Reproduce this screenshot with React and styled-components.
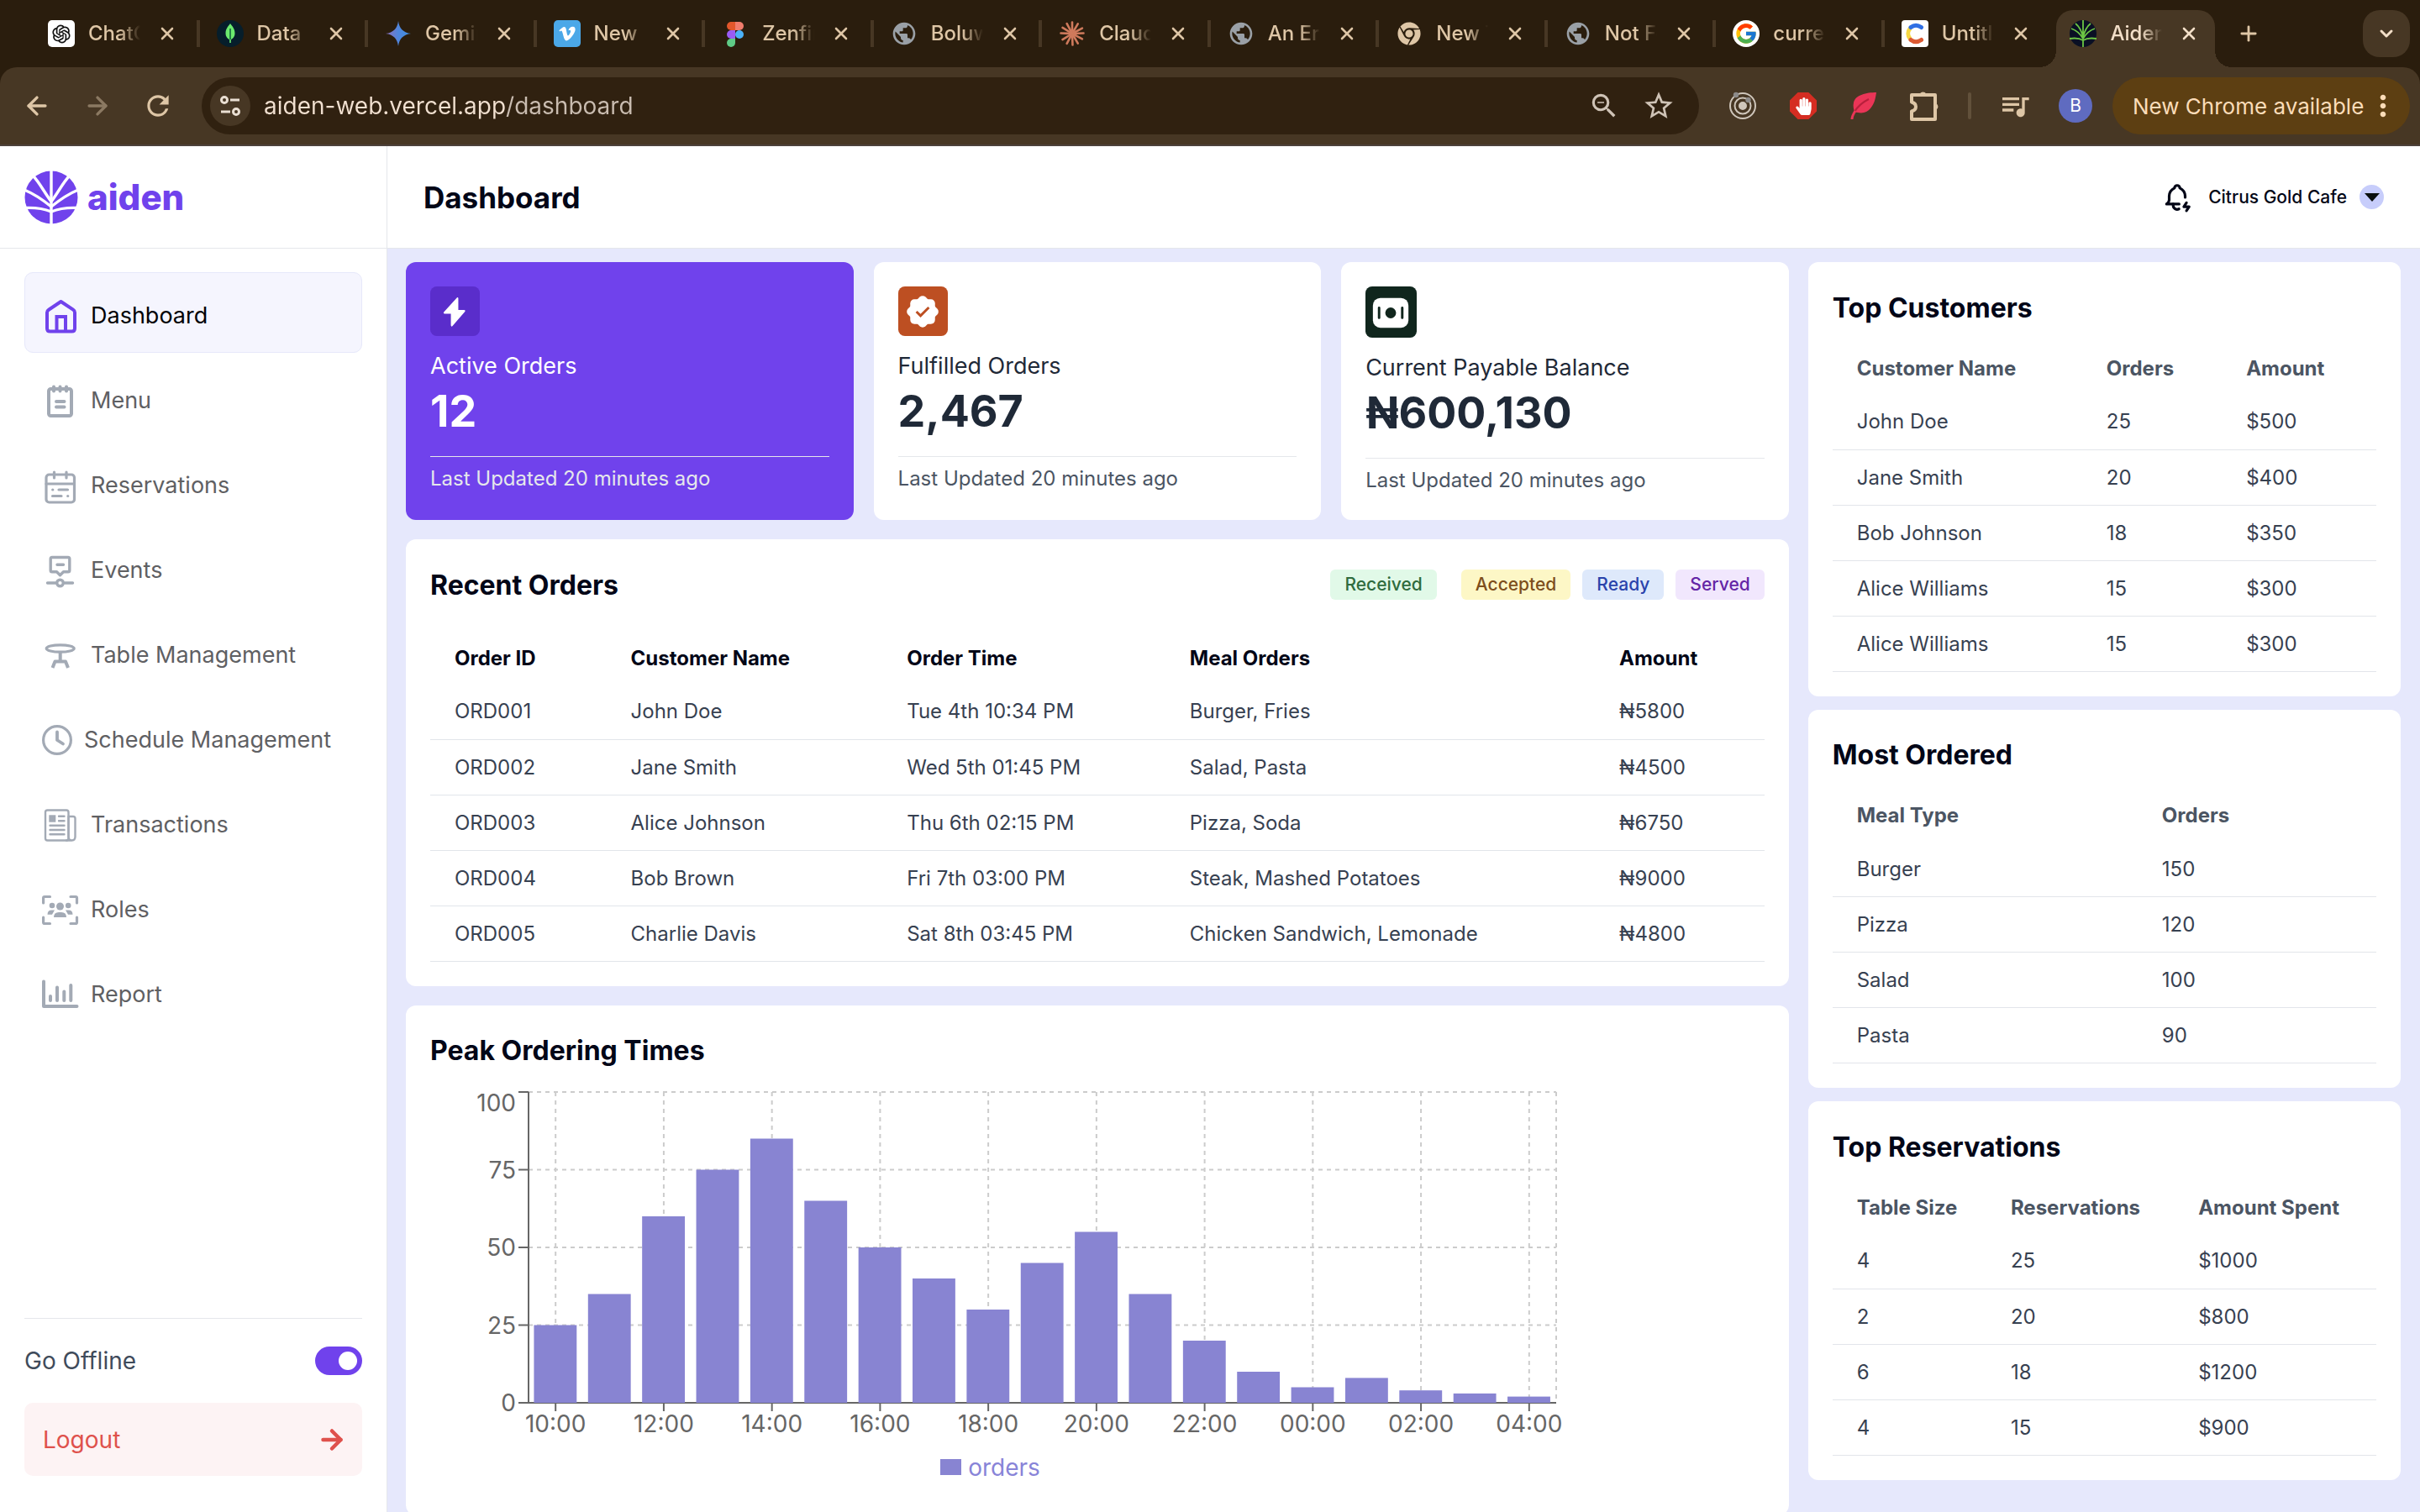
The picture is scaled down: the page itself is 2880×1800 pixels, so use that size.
import React, { useState } from "react"
import styled, { createGlobalStyle, css } from "styled-components"
import { ArrowLeft, ArrowRight, ChevronDown, Plus, X } from "lucide-react"
import { AiOutlineOpenAI } from "react-icons/ai"
import { FaChrome, FaHandPaper, FaVimeoV } from "react-icons/fa"
import { FcGoogle } from "react-icons/fc"
import { MdMoreVert, MdPublic, MdQueueMusic, MdRefresh, MdStarBorder, MdZoomOut } from "react-icons/md"
import { TbBellBolt } from "react-icons/tb"

const CURRENCY = "\u20A6"

/* ---------- favicons ---------- */

const MongoIcon = () => (
	<svg width="32" height="32" viewBox="0 0 32 32">
		<circle cx="16" cy="16" r="16" fill="#061e2b" />
		<path d="M16 4c3 4 5.500 6.500 5.500 11.500S18.500 22 16 24c-2.500-2-5.500-3.500-5.500-8.500S13 8 16 4z" fill="#6bea6e" />
		<path d="M16 10v17" stroke="#0b5a3a" strokeWidth="1.500" />
		<path d="M16 23v4" stroke="#6bea6e" strokeWidth="1.500" />
	</svg>
)

const GeminiIcon = () => (
	<svg width="32" height="32" viewBox="0 0 32 32">
		<defs>
			<linearGradient id="gemini" x1="0" y1="0" x2="1" y2="0">
				<stop offset="0" stopColor="#8f6fb8" />
				<stop offset="0.5" stopColor="#4f86dd" />
				<stop offset="1" stopColor="#3f8fe0" />
			</linearGradient>
		</defs>
		<path d="M16 1c1.200 9 6 13.800 15 15-9 1.200-13.800 6-15 15-1.200-9-6-13.800-15-15 9-1.200 13.800-6 15-15z" fill="url(#gemini)" />
	</svg>
)

const FigmaIcon = () => (
	<svg width="32" height="32" viewBox="0 0 32 32">
		<path d="M16 2h-5a5 5 0 0 0 0 10h5z" fill="#e2572b" />
		<path d="M16 2h5a5 5 0 0 1 0 10h-5z" fill="#f07c6c" />
		<path d="M16 12h-5a5 5 0 0 0 0 10h5z" fill="#9a5cf5" />
		<circle cx="21" cy="17" r="5" fill="#4bb2f9" />
		<path d="M16 22h-5a5 5 0 1 0 5 5z" fill="#5fcb86" />
	</svg>
)

const BurstIcon = () => (
	<svg width="32" height="32" viewBox="0 0 32 32" stroke="#cf7a5c" strokeWidth="2.600" strokeLinecap="round">
		{[0, 30, 62, 88, 118, 150, 178, 208, 238, 272, 302, 332].map((deg) => (
			<path key={deg} d="M16 16V2.500" transform={`rotate(${deg} 16 16)`} />
		))}
	</svg>
)

const ClickIcon = () => (
	<svg width="32" height="32" viewBox="0 0 32 32" fill="none" strokeWidth="5" strokeLinecap="round">
		<rect width="32" height="32" rx="4" fill="#fff" />
		<path d="M10 10a9.500 9.500 0 0 0 0 12" stroke="#f6d743" />
		<path d="M11 8.500q6-4.500 12.500 0" stroke="#2f6fe4" />
		<path d="M11 23.500q6 4.500 12.500 0" stroke="#dc5a33" />
	</svg>
)

const PalmIcon = () => (
	<svg width="32" height="32" viewBox="0 0 32 32" fill="none" stroke="#6cc644" strokeWidth="1.800">
		<circle cx="16" cy="16" r="16" fill="#0a1024" stroke="none" />
		<path d="M16 0v32M16 20C14 12 12 8 7 4M16 20c2-8 4-12 9-16M16 22C12 15 8 12 2 10M16 22c4-7 8-10 14-12M16 24C11 21 6 21 0 22M16 24c5-3 10-3 16-2" />
	</svg>
)

/* ---------- extension icons ---------- */

const TargetIcon = () => (
	<svg width="34" height="34" viewBox="0 0 34 34" fill="none" stroke="#cfc6bb" strokeWidth="2">
		<circle cx="17" cy="17" r="15" />
		<circle cx="17" cy="17" r="9.500" />
		<circle cx="17" cy="17" r="4" fill="#cfc6bb" />
		<circle cx="9" cy="4" r="2.200" fill="#8d8b8a" stroke="#8d8b8a" />
		<circle cx="23.500" cy="10" r="2.200" fill="#8d8b8a" stroke="#8d8b8a" />
	</svg>
)

const FeatherIcon = () => (
	<svg width="34" height="34" viewBox="0 0 34 34">
		<path d="M32 1C20 1 7 4 5 13c-1 4 0 8 1 11 9 3 15 1 19-4 5-6 6-12 7-19z" fill="#ea3557" />
		<path d="M23 9C15 13 9 19 6 24" fill="none" stroke="#b81f3c" strokeWidth="2" />
		<path d="M7 23c-2 3-4 6-4 10" fill="none" stroke="#ea3557" strokeWidth="3" />
	</svg>
)

const PuzzleIcon = () => (
	<svg width="36" height="40" viewBox="0 0 36 40" fill="none" stroke="currentColor" strokeWidth="4" strokeLinejoin="round">
		<path d="M3 7h28v29H3v-9.500q5-1.500 5-5.500t-5-5.500z" />
		<path d="M12.500 6a4.500 4.500 0 0 1 8 0zM32 17a4.500 4.500 0 0 1 0 8z" fill="currentColor" stroke="none" />
	</svg>
)

const TuneIcon = () => (
	<svg width="28" height="28" viewBox="0 0 28 28" fill="none" stroke="#eadfd3" strokeWidth="3">
		<circle cx="7" cy="7" r="3.500" />
		<path d="M14 7h11M3 21h11" />
		<circle cx="21" cy="21" r="3.500" />
	</svg>
)

/* ---------- app icons ---------- */

const LogoMark = () => (
	<svg width="64" height="64" viewBox="0 0 64 64">
		<circle cx="32" cy="32" r="31.500" fill="#7042ec" />
		<g fill="none" stroke="#fff" strokeWidth="3.400">
			<path d="M32 0v64" />
			<path d="M10 6C18 14 23 25 32 37M54 6C46 14 41 25 32 37" />
			<path d="M1 23.500C12 28 22 35 32 43M63 23.500C52 28 42 35 32 43" />
			<path d="M1 44.500C13 44 22 45 32 49M63 44.500C51 44 42 45 32 49" />
		</g>
	</svg>
)

const NavSvg = ({ children, ...rest }) => (
	<svg
		width="44"
		height="44"
		viewBox="0 0 44 44"
		fill="none"
		stroke="currentColor"
		strokeWidth="3.500"
		strokeLinecap="round"
		strokeLinejoin="round"
		{...rest}
	>
		{children}
	</svg>
)

const HomeIcon = () => (
	<NavSvg strokeWidth="4">
		<path d="M6 18q0-2 2-3.300L22.500 5 37 14.700q2 1.300 2 3.300v19q0 3.500-3.500 3.500h-26Q6 40.500 6 37z" />
		<path d="M17.500 40V23h10.500v17" strokeLinejoin="miter" />
	</NavSvg>
)

const MenuIcon = () => (
	<NavSvg strokeWidth="4">
		<rect x="8" y="8" width="27" height="32" rx="2.500" />
		<path d="M14 5.500v5M21.500 5.500v5M29 5.500v5M17 23h9.500M17 29.500h9.500" />
	</NavSvg>
)

const ReservationsIcon = () => (
	<NavSvg strokeWidth="3.200">
		<rect x="5" y="9" width="33.500" height="33" rx="3.500" />
		<path d="M14.500 6v7M29 6v7M5 20h33.500M12.700 27h.1M20 27h10.500M12.500 34.500h10.500M30.700 34.500h.1" />
	</NavSvg>
)

const EventsIcon = () => (
	<NavSvg strokeWidth="3.400">
		<path d="M12 6.500h19q1.800 0 1.800 1.800V22q0 1.800-1.800 1.800h-5.500l-4 4-4-4H12q-1.800 0-1.800-1.800V8.300Q10.200 6.500 12 6.500zM18 15.300h7.500M6.500 37H16M27 37h9.500" />
		<circle cx="21.500" cy="37" r="3.800" />
	</NavSvg>
)

const TableIcon = () => (
	<NavSvg strokeWidth="3.200" strokeLinecap="butt">
		<ellipse cx="21.700" cy="14" rx="16.500" ry="4.200" />
		<path d="M21.700 18v11M12.500 37l3-7.500h12.500l3 7.500" strokeWidth="4" />
	</NavSvg>
)

const ClockIcon = () => (
	<svg
		width="36"
		height="36"
		viewBox="0 0 36 36"
		fill="none"
		stroke="currentColor"
		strokeWidth="3.200"
		strokeLinecap="round"
		strokeLinejoin="round"
	>
		<circle cx="18" cy="18" r="16.400" />
		<path d="M18 8.500V18l7 4.500" strokeWidth="3.800" />
	</svg>
)

const TransactionsIcon = () => (
	<NavSvg strokeWidth="2.400">
		<rect x="4" y="4.500" width="27.500" height="36" rx="2.500" />
		<path d="M31.500 12h5.500q2.500 0 2.500 2.500V36q0 4.500-4 4.500t-4-4.500zM29 40.500h6.500" />
		<path d="M20 11.700h6.500M20 17.300h6.500M9.500 22.700h17M9.500 28h17M9.500 33.300h17" />
		<rect x="8.300" y="10.300" width="8" height="8.400" fill="currentColor" stroke="none" />
	</NavSvg>
)

const RolesIcon = () => (
	<NavSvg strokeWidth="3.200">
		<path d="M1.600 14V8q0-1.500 1.500-1.500H9.500M34 6.500h6q1.500 0 1.500 1.500v6M41.500 31v6q0 1.500-1.500 1.500h-6M9.500 38.500H3.100q-1.500 0-1.500-1.500v-6" />
		<g fill="currentColor" stroke="none">
			<circle cx="21.500" cy="18" r="4.500" />
			<circle cx="12" cy="17" r="3.300" />
			<circle cx="31.200" cy="17" r="3.300" />
			<path d="M14 31q0-6 6-6h3q6 0 6 6zM6.500 27.800q0-5.300 5-5.300h3.500q-1.500 2.500-3 5.300zM36.500 27.800q0-5.300-5-5.300H28q1.500 2.500 3 5.300z" />
		</g>
	</NavSvg>
)

const ReportIcon = () => (
	<NavSvg strokeWidth="4">
		<path d="M2 6.500v29.500h39.500M10 24v5M18 13.500V29M26.300 18.500V29M34.300 11V29" />
	</NavSvg>
)

const BoltIcon = () => (
	<svg width="59" height="59" viewBox="0 0 60 60">
		<rect width="60" height="60" rx="8" fill="#5a2dcb" />
		<path d="M32.500 13.500 16.500 31q-1 2 1 2h7.500v14q.5 2.500 2 .8L42 30.500q1-2-1-2h-7V14.500q-.3-2-1.500-1z" fill="#fff" />
	</svg>
)

const BadgeIcon = () => (
	<svg width="59" height="59" viewBox="0 0 60 60">
		<rect width="60" height="60" rx="8" fill="#bd4f22" />
		<g fill="#fff">
			<rect x="14.500" y="15.500" width="30" height="30" rx="5" />
			<rect x="14.500" y="15.500" width="30" height="30" rx="5" transform="rotate(45 29.500 30.500)" />
		</g>
		<path d="M22 30.500l5 5 10-10" fill="none" stroke="#bd4f22" strokeWidth="3" />
	</svg>
)

const CashIcon = () => (
	<svg width="61" height="61" viewBox="0 0 62 62">
		<rect width="62" height="62" rx="8" fill="#10261d" />
		<rect x="9" y="14" width="43" height="36" rx="9" fill="#fff" />
		<path d="M16.500 26v12M44.500 26v12" stroke="#10261d" strokeWidth="3" strokeLinecap="round" />
		<circle cx="30.500" cy="32" r="6.500" fill="#10261d" />
	</svg>
)

/* ---------- data ---------- */

const TABS = [
	{ title: "ChatGPT", icon: <FaviconTile $bg="#fff"><AiOutlineOpenAI size={28} color="#111" /></FaviconTile> },
	{ title: "Data", icon: <MongoIcon /> },
	{ title: "Gemini", icon: <GeminiIcon /> },
	{ title: "New", icon: <FaviconTile $bg="#4ba8e8"><FaVimeoV size={22} color="#fff" /></FaviconTile> },
	{ title: "Zenfinity", icon: <FigmaIcon /> },
	{ title: "Boluwatife", icon: <MdPublic size={34} color="#9aa0a6" /> },
	{ title: "Claude", icon: <BurstIcon /> },
	{ title: "An Error", icon: <MdPublic size={34} color="#9aa0a6" /> },
	{ title: "New Tab", icon: <FaChrome size={28} color="#dec6a6" /> },
	{ title: "Not Found", icon: <MdPublic size={34} color="#9aa0a6" /> },
	{ title: "currency", icon: <FaviconTile $bg="#fff" $round><FcGoogle size={28} /></FaviconTile> },
	{ title: "Untitled", icon: <ClickIcon /> },
	{ title: "Aiden", icon: <PalmIcon />, active: true },
]

const NAV = [
	{ label: "Dashboard", icon: <HomeIcon />, active: true },
	{ label: "Menu", icon: <MenuIcon /> },
	{ label: "Reservations", icon: <ReservationsIcon /> },
	{ label: "Events", icon: <EventsIcon /> },
	{ label: "Table Management", icon: <TableIcon /> },
	{ label: "Schedule Management", icon: <ClockIcon /> },
	{ label: "Transactions", icon: <TransactionsIcon /> },
	{ label: "Roles", icon: <RolesIcon /> },
	{ label: "Report", icon: <ReportIcon /> },
]

const STATS = [
	{ label: "Active Orders", value: "12", icon: <BoltIcon />, primary: true },
	{ label: "Fulfilled Orders", value: "2,467", icon: <BadgeIcon /> },
	{ label: "Current Payable Balance", value: `${CURRENCY}600,130`, icon: <CashIcon /> },
]

const ORDERS = {
	widths: ["13.2%", "20.7%", "21.2%", "32.2%", "12.7%"],
	head: ["Order ID", "Customer Name", "Order Time", "Meal Orders", "Amount"],
	rows: [
		["ORD001", "John Doe", "Tue 4th 10:34 PM", "Burger, Fries", `${CURRENCY}5800`],
		["ORD002", "Jane Smith", "Wed 5th 01:45 PM", "Salad, Pasta", `${CURRENCY}4500`],
		["ORD003", "Alice Johnson", "Thu 6th 02:15 PM", "Pizza, Soda", `${CURRENCY}6750`],
		["ORD004", "Bob Brown", "Fri 7th 03:00 PM", "Steak, Mashed Potatoes", `${CURRENCY}9000`],
		["ORD005", "Charlie Davis", "Sat 8th 03:45 PM", "Chicken Sandwich, Lemonade", `${CURRENCY}4800`],
	],
}

const SIDE_TABLES = [
	{
		title: "Top Customers",
		widths: ["45.9%", "25.7%", "28.4%"],
		head: ["Customer Name", "Orders", "Amount"],
		rows: [
			["John Doe", "25", "$500"],
			["Jane Smith", "20", "$400"],
			["Bob Johnson", "18", "$350"],
			["Alice Williams", "15", "$300"],
			["Alice Williams", "15", "$300"],
		],
	},
	{
		title: "Most Ordered",
		widths: ["56.1%", "43.9%"],
		head: ["Meal Type", "Orders"],
		rows: [
			["Burger", "150"],
			["Pizza", "120"],
			["Salad", "100"],
			["Pasta", "90"],
		],
	},
	{
		title: "Top Reservations",
		widths: ["28.3%", "34.5%", "37.2%"],
		head: ["Table Size", "Reservations", "Amount Spent"],
		rows: [
			["4", "25", "$1000"],
			["2", "20", "$800"],
			["6", "18", "$1200"],
			["4", "15", "$900"],
		],
	},
]

const HOURLY = [25, 35, 60, 75, 85, 65, 50, 40, 30, 45, 55, 35, 20, 10, 5, 8, 4, 3, 2]

/* ---------- pieces ---------- */

function BrowserBar() {
	return (
		<Browser>
			<TabStrip>
				<TabList>
					{TABS.map((tab, i) => (
						<Tab key={i} $active={tab.active} $divider={i < TABS.length - 2}>
							<Favicon>{tab.icon}</Favicon>
							<TabTitle $active={tab.active}>{tab.title}</TabTitle>
							<TabButton aria-label={`Close ${tab.title}`} $active={tab.active}>
								<X size={24} strokeWidth={2.600} />
							</TabButton>
						</Tab>
					))}
				</TabList>
				<StripEnd>
					<TabButton aria-label="New tab">
						<Plus size={28} strokeWidth={2.400} />
					</TabButton>
					<TabSearch aria-label="Search tabs">
						<ChevronDown size={24} strokeWidth={3} />
					</TabSearch>
				</StripEnd>
			</TabStrip>
			<Toolbar>
				<ToolButton aria-label="Back">
					<ArrowLeft size={34} strokeWidth={2.400} />
				</ToolButton>
				<ToolButton aria-label="Forward" disabled>
					<ArrowRight size={34} strokeWidth={2.400} />
				</ToolButton>
				<ToolButton aria-label="Reload">
					<MdRefresh size={38} />
				</ToolButton>
				<Omnibox>
					<SiteInfo aria-label="Site information">
						<TuneIcon />
					</SiteInfo>
					<Address aria-label="Address" defaultValue="aiden-web.vercel.app/dashboard" spellCheck={false} />
					<OmniButton aria-label="Zoom">
						<MdZoomOut size={38} />
					</OmniButton>
					<OmniButton aria-label="Bookmark">
						<MdStarBorder size={40} />
					</OmniButton>
				</Omnibox>
				<ToolButton aria-label="Recorder">
					<TargetIcon />
				</ToolButton>
				<ToolButton aria-label="Blocker">
					<Octagon>
						<FaHandPaper size={21} />
					</Octagon>
				</ToolButton>
				<ToolButton aria-label="Feather">
					<FeatherIcon />
				</ToolButton>
				<ToolButton aria-label="Extensions">
					<PuzzleIcon />
				</ToolButton>
				<ToolDivider />
				<ToolButton aria-label="Media">
					<MdQueueMusic size={40} />
				</ToolButton>
				<ToolButton aria-label="Profile">
					<Avatar>B</Avatar>
				</ToolButton>
				<UpdateButton>
					New Chrome available
					<MdMoreVert size={40} />
				</UpdateButton>
			</Toolbar>
		</Browser>
	)
}

function Sidebar() {
	const [offline, setOffline] = useState(true)

	return (
		<Aside>
			<Brand href="#">
				<LogoMark />
				aiden
			</Brand>
			<Nav>
				{NAV.map((item) => (
					<NavLink key={item.label} href="#" $active={item.active}>
						{item.icon}
						{item.label}
					</NavLink>
				))}
			</Nav>
			<AsideFooter>
				<OfflineRow>
					Go Offline
					<Switch type="checkbox" role="switch" checked={offline} onChange={() => setOffline(!offline)} />
				</OfflineRow>
				<LogoutButton>
					Logout
					<ArrowRight size={36} strokeWidth={3} />
				</LogoutButton>
			</AsideFooter>
		</Aside>
	)
}

function DataTable({ widths, head, rows, dark }) {
	return (
		<Table>
			<colgroup>
				{widths.map((width, i) => (
					<Col key={i} $width={width} />
				))}
			</colgroup>
			<thead>
				<tr>
					{head.map((text) => (
						<Th key={text} $dark={dark}>
							{text}
						</Th>
					))}
				</tr>
			</thead>
			<tbody>
				{rows.map((row, i) => (
					<tr key={i}>
						{row.map((text, j) => (
							<Td key={j}>{text}</Td>
						))}
					</tr>
				))}
			</tbody>
		</Table>
	)
}

function OrdersChart() {
	const left = 117
	const top = 11
	const width = 1223
	const height = 370
	const bottom = top + height
	const band = width / HOURLY.length
	const y = (value) => bottom - (value / 100) * height
	const hours = HOURLY.map((_, i) => ({ x: left + band * (i + 0.5), hour: (10 + i) % 24 })).filter((_, i) => i % 2 === 0)

	return (
		<ChartBox>
			<ChartSvg viewBox="0 0 1333 432" role="img" aria-label="Orders by hour">
				<g stroke="#ccc" strokeWidth="2" strokeDasharray="5 5">
					{[25, 50, 75, 100].map((v) => (
						<path key={v} d={`M${left} ${y(v)}h${width}`} />
					))}
					{hours.map(({ x }) => (
						<path key={x} d={`M${x} ${top}v${height}`} />
					))}
					<path d={`M${left + width} ${top}v${height}`} />
				</g>
				<g stroke="#666" strokeWidth="2">
					<path d={`M${left} ${top}v${height}h${width}`} fill="none" />
					{[0, 25, 50, 75, 100].map((v) => (
						<path key={v} d={`M${left} ${y(v)}h-12`} />
					))}
					{hours.map(({ x }) => (
						<path key={x} d={`M${x} ${bottom}v10`} />
					))}
				</g>
				{HOURLY.map((v, i) => (
					<rect key={i} x={left + band * (i + 0.1)} y={y(v)} width={band * 0.79} height={bottom - y(v)} fill="#8884d2" />
				))}
				{[0, 25, 50, 75, 100].map((v) => (
					<AxisText key={v} x={left - 15} y={v === 100 ? top + 23 : y(v) + 10} textAnchor="end">
						{v}
					</AxisText>
				))}
				{hours.map(({ x, hour }) => (
					<AxisText key={x} x={x} y={bottom + 35} textAnchor="middle">
						{String(hour).padStart(2, "0")}:00
					</AxisText>
				))}
			</ChartSvg>
			<Legend>orders</Legend>
		</ChartBox>
	)
}

function App() {
	return (
		<Shell>
			<GlobalStyle />
			<BrowserBar />
			<Page>
				<Sidebar />
				<Main>
					<Header>
						<PageTitle>Dashboard</PageTitle>
						<Account>
							<TbBellBolt size={38} strokeWidth={2} />
							<AccountButton>
								Citrus Gold Cafe
								<Caret>
									<svg width="18" height="10" viewBox="0 0 18 10">
										<path d="M0 0h18L9 10z" fill="#0a0f0d" />
									</svg>
								</Caret>
							</AccountButton>
						</Account>
					</Header>
					<Content>
						<Primary>
							<StatGrid>
								{STATS.map((stat) => (
									<StatCard key={stat.label} $primary={stat.primary}>
										{stat.icon}
										<StatLabel>{stat.label}</StatLabel>
										<StatValue>{stat.value}</StatValue>
										<StatNote $primary={stat.primary}>Last Updated 20 minutes ago</StatNote>
									</StatCard>
								))}
							</StatGrid>
							<Card>
								<CardHead $spaced>
									<CardTitle>Recent Orders</CardTitle>
									<Badges>
										<Badge $bg="#e1f9e8" $fg="#2f6b3d" $first>
											Received
										</Badge>
										<Badge $bg="#fdf7c6" $fg="#7d4e1c">
											Accepted
										</Badge>
										<Badge $bg="#dee9fb" $fg="#2a43ab">
											Ready
										</Badge>
										<Badge $bg="#f1e7fd" $fg="#6425a6">
											Served
										</Badge>
									</Badges>
								</CardHead>
								<DataTable {...ORDERS} dark />
							</Card>
							<Card>
								<CardHead>
									<CardTitle>Peak Ordering Times</CardTitle>
								</CardHead>
								<OrdersChart />
							</Card>
						</Primary>
						<Secondary>
							{SIDE_TABLES.map(({ title, ...table }) => (
								<Card key={title}>
									<CardHead>
										<CardTitle>{title}</CardTitle>
									</CardHead>
									<DataTable {...table} />
								</Card>
							))}
						</Secondary>
					</Content>
				</Main>
			</Page>
		</Shell>
	)
}

export default App

/* ---------- styles ---------- */

const GlobalStyle = createGlobalStyle`
	* {
		box-sizing: border-box;
	}
	body {
		margin: 0;
		font-family: "Inter", "Liberation Sans", sans-serif;
		color: #020617;
	}
	button {
		font: inherit;
		color: inherit;
		border: 0;
		padding: 0;
		background: none;
		cursor: pointer;
	}
	a {
		color: inherit;
		text-decoration: none;
	}
`

const Shell = styled.div`
	display: flex;
	flex-direction: column;
	height: 100vh;
	overflow: hidden;
`

const Browser = styled.div`
	background: #2a1d0d;
	color: #dec6a6;
`
const TabStrip = styled.div`
	display: flex;
	height: 80px;
	padding-left: 37px;
`
const TabList = styled.div`
	display: flex;
	flex: 1;
	min-width: 0;
`
const Tab = styled.div`
	flex: 1 1 0;
	min-width: 0;
	display: flex;
	align-items: center;
	padding-left: 20px;
	position: relative;
	isolation: isolate;
	${(p) =>
		p.$divider &&
		css`
			background: linear-gradient(#473724, #473724) right center / 4px 32px no-repeat;
		`}
	${(p) =>
		p.$active &&
		css`
			&::before {
				content: "";
				position: absolute;
				z-index: -1;
				inset: 12px 8px 0 4px;
				border-radius: 20px 20px 0 0;
				background: #473724;
			}
			&::after {
				content: "";
				position: absolute;
				z-index: -1;
				left: -16px;
				right: -12px;
				bottom: 0;
				height: 20px;
				background: radial-gradient(circle at 0 0, transparent 20px, #473724 20px) left / 20px 20px no-repeat,
					radial-gradient(circle at 100% 0, transparent 20px, #473724 20px) right / 20px 20px no-repeat;
			}
		`}
`
const Favicon = styled.span`
	width: 32px;
	height: 32px;
	display: flex;
	align-items: center;
	justify-content: center;
`
const TabTitle = styled.span`
	width: 62px;
	margin: 0 20px 0 16px;
	overflow: hidden;
	white-space: nowrap;
	font-size: 24px;
	font-weight: 500;
	line-height: 32px;
	color: ${(p) => (p.$active ? "#f3dfc8" : "#dec6a6")};
	mask-image: linear-gradient(90deg, #000 60%, transparent);
`
const TabButton = styled.button`
	display: flex;
	color: ${(p) => (p.$active ? "#f3dfc8" : "#dec6a6")};
`
const StripEnd = styled.div`
	width: 236px;
	display: flex;
	align-items: center;
	justify-content: space-between;
	padding: 0 12px 0 18px;
`
const TabSearch = styled(TabButton)`
	width: 56px;
	height: 56px;
	align-items: center;
	justify-content: center;
	border-radius: 20px;
	background: #473724;
	color: #f3dfc8;
`
const Toolbar = styled.div`
	display: flex;
	align-items: center;
	padding: 12px 12px 12px 8px;
	border-bottom: 2px solid #4c413b;
	border-radius: 20px 20px 0 0;
	background: #473724;
`
const ToolButton = styled.button`
	width: 72px;
	height: 48px;
	display: flex;
	align-items: center;
	justify-content: center;
	&:disabled {
		color: #8b7962;
	}
`
const Omnibox = styled.div`
	flex: 1;
	height: 68px;
	margin: 0 16px;
	padding: 0 16px 0 10px;
	display: flex;
	align-items: center;
	border-radius: 34px;
	background: #302110;
	color: #cfc3b6;
`
const SiteInfo = styled.button`
	width: 48px;
	height: 48px;
	display: flex;
	align-items: center;
	justify-content: center;
	border-radius: 50%;
	background: #473724;
`
const Address = styled.input`
	flex: 1;
	min-width: 0;
	margin-left: 16px;
	padding: 0;
	border: 0;
	outline: 0;
	font: 400 28px/40px "Inter", sans-serif;
	color: transparent;
	background: linear-gradient(90deg, #f1e0d0 288px, #c9bcb0 288px);
	background-clip: text;
	-webkit-background-clip: text;
`
const OmniButton = styled.button`
	width: 65px;
	display: flex;
	justify-content: center;
`
const Octagon = styled.span`
	width: 32px;
	height: 32px;
	display: flex;
	align-items: center;
	justify-content: center;
	color: #fff;
	background: #d52d22;
	clip-path: polygon(30% 0, 70% 0, 100% 30%, 100% 70%, 70% 100%, 30% 100%, 0 70%, 0 30%);
`
const ToolDivider = styled.span`
	width: 4px;
	height: 32px;
	margin: 0 16px;
	border-radius: 2px;
	background: #62513b;
`
const Avatar = styled.span`
	width: 40px;
	height: 40px;
	border-radius: 50%;
	background: #5f6bc0;
	color: #fff;
	font-size: 21px;
	line-height: 40px;
	text-align: center;
`
const UpdateButton = styled.button`
	display: flex;
	align-items: center;
	justify-content: space-between;
	width: 354px;
	height: 68px;
	margin-left: 8px;
	padding: 0 12px 0 24px;
	border-radius: 34px;
	background: #5d3f12;
	color: #fbdcb8;
	font-size: 26px;
	white-space: nowrap;
`

const Page = styled.div`
	flex: 1;
	min-height: 0;
	display: flex;
`
const Aside = styled.aside`
	flex: none;
	width: 461px;
	display: flex;
	flex-direction: column;
	border-right: 1px solid #e5e7eb;
	background: #fff;
`
const Brand = styled.a`
	display: flex;
	align-items: center;
	gap: 11px;
	height: 122px;
	padding-left: 29px;
	border-bottom: 1px solid #e5e7eb;
	color: #7042ec;
	font-size: 42px;
	font-weight: 800;
`
const Nav = styled.nav`
	flex: 1;
	display: flex;
	flex-direction: column;
	gap: 5px;
	padding: 28px 29px 0;
`
const NavLink = styled.a`
	display: flex;
	align-items: center;
	gap: 14px;
	height: 96px;
	padding: 7px 20px 0;
	border: 1px solid transparent;
	border-radius: 10px;
	font-size: 27px;
	white-space: nowrap;
	color: #5f6063;
	svg {
		flex: none;
		color: #a3aab5;
	}
	${(p) =>
		p.$active &&
		css`
			color: #020205;
			border-color: #e6e8fa;
			background: #f5f5fe;
			svg {
				color: #7042ec;
			}
		`}
`
const AsideFooter = styled.div`
	margin: 0 29px 43px;
	border-top: 1px solid #e5e7eb;
	color: #3f4b5b;
	font-size: 28px;
`
const OfflineRow = styled.label`
	display: flex;
	align-items: center;
	justify-content: space-between;
	height: 100px;
`
const Switch = styled.input`
	appearance: none;
	width: 56px;
	height: 34px;
	margin: 0;
	padding: 6px;
	border-radius: 17px;
	background: #cbd5e1;
	cursor: pointer;
	&::before {
		content: "";
		display: block;
		width: 22px;
		height: 22px;
		border-radius: 50%;
		background: #fff;
	}
	&:checked {
		background: #7042ec;
	}
	&:checked::before {
		margin-left: auto;
	}
`
const LogoutButton = styled.button`
	display: flex;
	align-items: center;
	justify-content: space-between;
	width: 100%;
	height: 87px;
	padding: 0 18px 0 22px;
	border-radius: 10px;
	background: #fdf3f4;
	color: #df514c;
`

const Main = styled.main`
	flex: 1;
	min-width: 0;
	display: flex;
	flex-direction: column;
	background: #e6e8fc;
`
const Header = styled.header`
	flex: none;
	display: flex;
	align-items: center;
	justify-content: space-between;
	height: 122px;
	padding: 0 43px;
	border-bottom: 1px solid #e5e7eb;
	background: #fff;
`
const PageTitle = styled.h1`
	margin: 0;
	font-size: 35px;
	font-weight: 700;
`
const Account = styled.div`
	display: flex;
	align-items: center;
	gap: 18px;
`
const AccountButton = styled.button`
	display: flex;
	align-items: center;
	gap: 15px;
	font-size: 21px;
	font-weight: 500;
`
const Caret = styled.span`
	width: 29px;
	height: 29px;
	display: flex;
	align-items: center;
	justify-content: center;
	border-radius: 50%;
	background: #c7cdfb;
`
const Content = styled.div`
	flex: 1;
	min-height: 0;
	display: flex;
	align-items: flex-start;
	gap: 23px;
	padding: 16px 23px 0 22px;
	overflow: hidden;
`
const Primary = styled.div`
	flex: 7 1 0;
	min-width: 0;
	display: flex;
	flex-direction: column;
	gap: 23px;
`
const Secondary = styled.div`
	flex: 3 1 0;
	min-width: 0;
	display: flex;
	flex-direction: column;
	gap: 16px;
`
const StatGrid = styled.div`
	display: grid;
	grid-template-columns: repeat(3, 1fr);
	gap: 24px;
`
const Card = styled.section`
	padding: 29px;
	border-radius: 12px;
	background: #fff;
`
const StatCard = styled(Card)`
	color: ${(p) => (p.$primary ? "#fff" : "#1f2937")};
	background: ${(p) => (p.$primary ? "#7042ec" : "#fff")};
	> svg {
		display: block;
	}
`
const StatLabel = styled.div`
	margin-top: 16px;
	font-size: 27px;
	line-height: 40px;
`
const StatValue = styled.div`
	font-size: 52px;
	font-weight: 700;
	line-height: 68px;
`
const StatNote = styled.div`
	margin-top: 19px;
	padding-top: 8px;
	border-top: 1px solid #e5e7eb;
	font-size: 24px;
	line-height: 36px;
	color: ${(p) => (p.$primary ? "#e5e7eb" : "#4b5563")};
`
const CardHead = styled.div`
	display: flex;
	align-items: center;
	justify-content: space-between;
	height: 50px;
	margin-bottom: ${(p) => (p.$spaced ? "28px" : "13px")};
`
const CardTitle = styled.h2`
	margin: 0;
	font-size: 32px;
	font-weight: 700;
`
const Badges = styled.div`
	display: flex;
	gap: 14px;
`
const Badge = styled.span`
	padding: 0 17px;
	margin-right: ${(p) => (p.$first ? "15px" : "0")};
	border-radius: 6px;
	font-size: 21px;
	font-weight: 500;
	line-height: 36px;
	color: ${(p) => p.$fg};
	background: ${(p) => p.$bg};
`
const Table = styled.table`
	width: 100%;
	table-layout: fixed;
	border-collapse: collapse;
	font-size: 24px;
`
const Col = styled.col`
	width: ${(p) => p.$width};
`
const Th = styled.th`
	height: 65px;
	padding: 3px 0 0 29px;
	text-align: left;
	white-space: nowrap;
	font-weight: 700;
	color: ${(p) => (p.$dark ? "#020617" : "#4b5563")};
`
const Td = styled.td`
	height: 66px;
	padding: 0 0 0 29px;
	border-bottom: 1px solid #e2e5ea;
	white-space: nowrap;
	color: #374151;
`
const ChartBox = styled.div`
	max-width: 1333px;
`
const ChartSvg = styled.svg`
	display: block;
	width: 100%;
	overflow: visible;
`
const AxisText = styled.text`
	font-size: 28px;
	fill: #666;
`
const Legend = styled.div`
	display: flex;
	align-items: center;
	justify-content: center;
	gap: 8px;
	height: 52px;
	margin-bottom: 2px;
	color: #8884d8;
	font-size: 28px;
	&::before {
		content: "";
		width: 25px;
		height: 19px;
		background: #8884d2;
	}
`

function FaviconTile({ $bg, $round, children }) {
	return (
		<Tile $bg={$bg} $round={$round}>
			{children}
		</Tile>
	)
}

const Tile = styled.span`
	width: 32px;
	height: 32px;
	display: flex;
	align-items: center;
	justify-content: center;
	border-radius: ${(p) => (p.$round ? "50%" : "5px")};
	background: ${(p) => p.$bg};
`
